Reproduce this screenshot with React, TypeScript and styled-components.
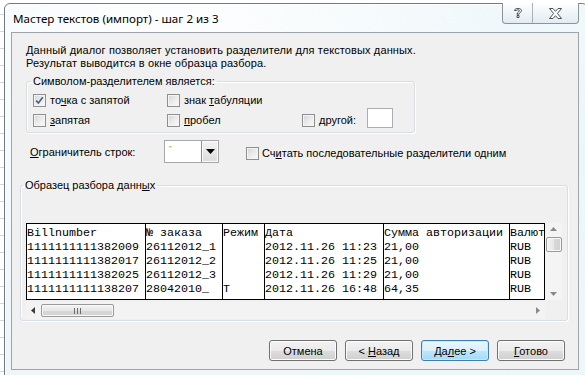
import React from "react";
import styled, { createGlobalStyle, css } from "styled-components";

const GlobalStyle = createGlobalStyle`
  html, body {
    margin: 0;
    padding: 0;
  }
  body {
    font-family: "Liberation Sans", Tahoma, Arial, sans-serif;
    background: #ffffff;
  }
  #root {
    width: 585px;
    height: 375px;
    overflow: hidden;
  }
`;

const Desktop = styled.div`
  width: 585px;
  height: 375px;
  overflow: hidden;
  box-sizing: border-box;
  padding: 3px 0 0 4px;
  background-color: #ffffff;
  background-image: repeating-linear-gradient(
    to bottom,
    transparent 0 14px,
    #d6d6d6 14px 15px,
    transparent 15px 17px
  );
`;

const Window = styled.div`
  width: 584px;
  height: 390px;
  box-sizing: border-box;
  border: 1px solid #6e7b85;
  border-radius: 6px 6px 0 0;
  padding: 0 8px 0 6px;
  display: flex;
  flex-direction: column;
  background: radial-gradient(ellipse at 30% 20%, #ffffff 0%, rgba(255, 255, 255, 0) 60%),
    radial-gradient(ellipse at 80% 40%, #e9f6fa 0%, rgba(233, 246, 250, 0) 70%),
    linear-gradient(to bottom, #f4f9fb, #eef6f9);
  box-shadow: inset 1px 1px 0 #ffffff;
`;

const TitleBar = styled.div`
  height: 28px;
  display: flex;
  align-items: flex-start;
  justify-content: space-between;
`;

const Title = styled.span`
  margin: 7px 0 0 2px;
  font-family: "Noto Sans", "Segoe UI", sans-serif;
  font-size: 11.6px;
  line-height: 15px;
  color: #000000;
`;

const CaptionGroup = styled.div`
  display: flex;
  margin-top: -1px;
  height: 20px;
  border: 1px solid #8c949b;
  border-top: none;
  border-radius: 0 0 4px 4px;
  overflow: hidden;
  background: linear-gradient(to bottom, #fdfeff 0%, #eef4f8 55%, #e3ecf2 100%);
`;

const CaptionButton = styled.div<{ $w: number; $divider?: boolean }>`
  width: ${({ $w }) => $w}px;
  height: 100%;
  display: flex;
  align-items: center;
  justify-content: center;
  ${({ $divider }) =>
    $divider &&
    css`
      border-right: 1px solid #a9b2b9;
    `}
`;

const Client = styled.div`
  height: 338px;
  box-sizing: border-box;
  border: 1px solid #9ea4a9;
  background: #f0f0f0;
  display: flex;
  flex-direction: column;
  font-size: 11px;
  color: #000000;
`;

const Intro = styled.div`
  margin: 11px 0 0 14px;
  line-height: 13px;
  letter-spacing: 0.12px;
`;

const GroupBox = styled.fieldset<{ $left: number; $top: number; $width: number; $height: number }>`
  margin: ${({ $top }) => $top}px 0 0 ${({ $left }) => $left}px;
  width: ${({ $width }) => $width}px;
  height: ${({ $height }) => $height}px;
  box-sizing: border-box;
  min-width: 0;
  padding: 0;
  border: 1px solid #d5dfe5;
  border-radius: 3px;
  box-shadow: inset 1px 1px 0 #ffffff, 1px 1px 0 #ffffff;
`;

const Legend = styled.legend<{ $offset: number }>`
  margin-left: ${({ $offset }) => $offset}px;
  padding: 0 2px;
  line-height: 13px;
`;

const OptionGrid = styled.div`
  display: grid;
  grid-template-columns: 134px 135px auto;
  grid-template-rows: 20px 20px;
  padding: 2px 0 0 6px;
`;

const Option = styled.label<{ $col: number; $row: number }>`
  grid-column: ${({ $col }) => $col};
  grid-row: ${({ $row }) => $row};
  display: flex;
  align-items: center;
  gap: 4px;
  white-space: nowrap;
`;

const Box = styled.span`
  width: 13px;
  height: 13px;
  box-sizing: border-box;
  flex: none;
  border: 1px solid #8e8f8f;
  background: linear-gradient(135deg, #d2d2d2 0%, #e9e9e9 45%, #fbfbfb 100%);
  box-shadow: inset 0 0 0 1px #f4f4f4;
  display: flex;
  align-items: center;
  justify-content: center;
`;

const OtherInput = styled.span`
  width: 26px;
  height: 20px;
  box-sizing: border-box;
  margin: -4px 0 0 7px;
  border: 1px solid #abadb3;
  background: #ffffff;
`;

const QuoteRow = styled.div`
  display: flex;
  align-items: center;
  margin: 7px 0 0 18px;
  height: 23px;
`;

const QuoteLabel = styled.span`
  width: 134px;
`;

const Combo = styled.div`
  width: 55px;
  height: 23px;
  box-sizing: border-box;
  border: 1px solid #a7a7a7;
  background: #ffffff;
  display: flex;
  justify-content: space-between;
`;

const ComboValue = styled.span`
  padding: 3px 0 0 4px;
  font-size: 8px;
  color: #c66a1c;
  line-height: 10px;
`;

const ComboButton = styled.span`
  width: 17px;
  height: 21px;
  box-sizing: border-box;
  border: 1px solid #8d8d8d;
  border-width: 0 0 0 1px;
  background: linear-gradient(to bottom, #f3f3f3, #dcdcdc);
  box-shadow: inset 0 0 0 1px #fafafa;
  display: flex;
  align-items: center;
  justify-content: center;
`;

const ConsecutiveOption = styled.label`
  display: flex;
  align-items: center;
  gap: 3px;
  margin: 3px 0 0 27px;
  white-space: nowrap;
`;

const Preview = styled.div`
  display: grid;
  grid-template-columns: 519px 17px;
  grid-template-rows: 77px 17px;
  row-gap: 2px;
  margin: 31px 0 0 5px;
`;

const DataTable = styled.div`
  display: flex;
  box-sizing: border-box;
  border: 1px solid #000000;
  background: #ffffff;
  padding: 2px 0;
  overflow: hidden;
  font-family: "Liberation Mono", "Courier New", monospace;
  font-size: 11.67px;
  line-height: 14px;
  color: #000000;
`;

const DataColumn = styled.div<{ $chars: number; $last?: boolean }>`
  flex: none;
  width: ${({ $chars }) => $chars * 7}px;
  box-sizing: border-box;
  margin: -2px 0;
  padding-top: 2px;
  border-right: ${({ $last }) => ($last ? "none" : "1px solid #000000")};
  white-space: pre;
  overflow: hidden;
`;

const Cell = styled.div`
  height: 14px;
`;

const VScroll = styled.div`
  background: #f4f4f4;
  display: flex;
  flex-direction: column;
  align-items: center;
  padding: 4px 0;
  box-sizing: border-box;
`;

const HScroll = styled.div`
  grid-column: 1 / 2;
  background: #f3f3f3;
  display: flex;
  align-items: center;
  padding: 0 5px;
  box-sizing: border-box;
`;

const Thumb = styled.div<{ $horizontal?: boolean }>`
  box-sizing: border-box;
  border: 1px solid #9a9a9a;
  border-radius: 2px;
  background: ${({ $horizontal }) =>
    $horizontal
      ? "linear-gradient(to bottom, #f4f4f4, #e7e7e7 50%, #d8d8d8 51%, #d2d2d2)"
      : "linear-gradient(to right, #f4f4f4, #e7e7e7 50%, #d8d8d8 51%, #d2d2d2)"};
  box-shadow: inset 0 0 0 1px #f8f8f8;
  display: flex;
  align-items: center;
  justify-content: center;
`;

const VThumb = styled(Thumb)`
  width: 16px;
  height: 15px;
  margin: 6px 0 auto;
`;

const HThumb = styled(Thumb)`
  width: 73px;
  height: 13px;
  margin-left: 6px;
`;

const Spacer = styled.div`
  flex: 1;
`;

const ButtonRow = styled.div`
  display: flex;
  justify-content: flex-end;
  gap: 8px;
  margin: 19px 13px 0 0;
`;

const DialogButton = styled.button<{ $focused?: boolean }>`
  width: 68px;
  height: 21px;
  box-sizing: border-box;
  padding: 0;
  font-family: "Liberation Sans", Tahoma, Arial, sans-serif;
  font-size: 11px;
  color: #000000;
  border: 1px solid ${({ $focused }) => ($focused ? "#3c7fb1" : "#707070")};
  border-radius: 3px;
  background: ${({ $focused }) =>
    $focused
      ? "linear-gradient(to bottom, #eaf6fd 0%, #d9f0fc 50%, #bee6fd 51%, #a7d9f5 100%)"
      : "linear-gradient(to bottom, #f2f2f2 0%, #ebebeb 50%, #dddddd 51%, #cfcfcf 100%)"};
  box-shadow: inset 0 0 0 1px ${({ $focused }) => ($focused ? "#c8e9fb" : "#fcfcfc")};
`;

const Check = () => (
  <svg width="9" height="9" viewBox="0 0 9 9">
    <path d="M1.2 4.6 L3.4 7 L7.8 1.2" fill="none" stroke="#4b5f8f" strokeWidth="1.7" />
  </svg>
);

const Checkbox = ({ checked }: { checked?: boolean }) => <Box>{checked && <Check />}</Box>;

const rows = [
  ["Billnumber", "№ заказа", "Режим", "Дата", "Сумма авторизации", "Валют"],
  ["1111111111382009", "26112012_1", "", "2012.11.26 11:23", "21,00", "RUB"],
  ["1111111111382017", "26112012_2", "", "2012.11.26 11:25", "21,00", "RUB"],
  ["1111111111382025", "26112012_3", "", "2012.11.26 11:29", "21,00", "RUB"],
  ["1111111111138207", "28042010_", "T", "2012.11.26 16:48", "64,35", "RUB"],
];

const columnChars = [17, 11, 6, 17, 18, 5];

export default function App() {
  return (
    <>
      <GlobalStyle />
      <Desktop>
        <Window>
          <TitleBar>
            <Title>Мастер текстов (импорт) - шаг 2 из 3</Title>
            <CaptionGroup>
              <CaptionButton $w={29} $divider>
                <svg width="10" height="12" viewBox="0 0 10 12">
                  <path
                    d="M1.5 3.5 C1.5 0.8 8.5 0.8 8.5 3.6 C8.5 5.4 6 5.6 6 7.2 L4 7.2 C4 5 6.5 4.9 6.5 3.7 C6.5 2.6 3.5 2.6 3.5 3.5 Z M4 8.5 L6 8.5 L6 10.5 L4 10.5 Z"
                    fill="#ffffff"
                    stroke="#3a3f44"
                    strokeWidth="0.9"
                  />
                </svg>
              </CaptionButton>
              <CaptionButton $w={45}>
                <svg width="13" height="11" viewBox="0 0 13 11">
                  <path
                    d="M0.5 0.5 L4 0.5 L6.5 3.3 L9 0.5 L12.5 0.5 L8.4 5.5 L12.5 10.5 L9 10.5 L6.5 7.7 L4 10.5 L0.5 10.5 L4.6 5.5 Z"
                    fill="#ffffff"
                    stroke="#3a3f44"
                    strokeWidth="0.9"
                  />
                </svg>
              </CaptionButton>
            </CaptionGroup>
          </TitleBar>
          <Client>
            <Intro>
              Данный диалог позволяет установить разделители для текстовых данных.
              <br />
              Результат выводится в окне образца разбора.
            </Intro>
            <GroupBox $left={14} $top={5} $width={389} $height={58}>
              <Legend $offset={4}>Символом-разделителем является:</Legend>
              <OptionGrid>
                <Option $col={1} $row={1}>
                  <Checkbox checked />
                  <span>
                    то<u>ч</u>ка с запятой
                  </span>
                </Option>
                <Option $col={2} $row={1}>
                  <Checkbox />
                  <span>
                    знак <u>т</u>абуляции
                  </span>
                </Option>
                <Option $col={1} $row={2}>
                  <Checkbox />
                  <span>
                    <u>з</u>апятая
                  </span>
                </Option>
                <Option $col={2} $row={2}>
                  <Checkbox />
                  <span>
                    <u>п</u>робел
                  </span>
                </Option>
                <Option $col={3} $row={2}>
                  <Checkbox />
                  <span>
                    <u>д</u>ругой:
                  </span>
                  <OtherInput />
                </Option>
              </OptionGrid>
            </GroupBox>
            <QuoteRow>
              <QuoteLabel>
                <u>О</u>граничитель строк:
              </QuoteLabel>
              <Combo>
                <ComboValue>"</ComboValue>
                <ComboButton>
                  <svg width="9" height="5" viewBox="0 0 9 5">
                    <path d="M0 0 L9 0 L4.5 5 Z" fill="#000000" />
                  </svg>
                </ComboButton>
              </Combo>
              <ConsecutiveOption>
                <Checkbox />
                <span>
                  Сч<u>и</u>тать последовательные разделители одним
                </span>
              </ConsecutiveOption>
            </QuoteRow>
            <GroupBox $left={8} $top={16} $width={548} $height={142}>
              <Legend $offset={2}>
                Образец разбора данн<u>ы</u>х
              </Legend>
              <Preview>
                <DataTable>
                  {columnChars.map((chars, c) => (
                    <DataColumn key={c} $chars={chars} $last={c === columnChars.length - 1}>
                      {rows.map((row, r) => (
                        <Cell key={r}>{row[c]}</Cell>
                      ))}
                    </DataColumn>
                  ))}
                </DataTable>
                <VScroll>
                  <svg width="7" height="4" viewBox="0 0 7 4">
                    <path d="M0 4 L7 4 L3.5 0 Z" fill="#8a8a8a" />
                  </svg>
                  <VThumb />
                  <svg width="7" height="4" viewBox="0 0 7 4">
                    <path d="M0 0 L7 0 L3.5 4 Z" fill="#8a8a8a" />
                  </svg>
                </VScroll>
                <HScroll>
                  <svg width="4" height="7" viewBox="0 0 4 7">
                    <path d="M4 0 L4 7 L0 3.5 Z" fill="#3c3c3c" />
                  </svg>
                  <HThumb $horizontal>
                    <svg width="7" height="6" viewBox="0 0 7 6">
                      <path d="M0.5 0 V6 M3.5 0 V6 M6.5 0 V6" stroke="#6a6a6a" strokeWidth="1" />
                    </svg>
                  </HThumb>
                  <Spacer />
                  <svg width="4" height="7" viewBox="0 0 4 7">
                    <path d="M0 0 L0 7 L4 3.5 Z" fill="#8a8a8a" />
                  </svg>
                </HScroll>
              </Preview>
            </GroupBox>
            <ButtonRow>
              <DialogButton>Отмена</DialogButton>
              <DialogButton>
                &lt; <u>Н</u>азад
              </DialogButton>
              <DialogButton $focused>
                Да<u>л</u>ее &gt;
              </DialogButton>
              <DialogButton>
                <u>Г</u>отово
              </DialogButton>
            </ButtonRow>
          </Client>
        </Window>
      </Desktop>
    </>
  );
}
